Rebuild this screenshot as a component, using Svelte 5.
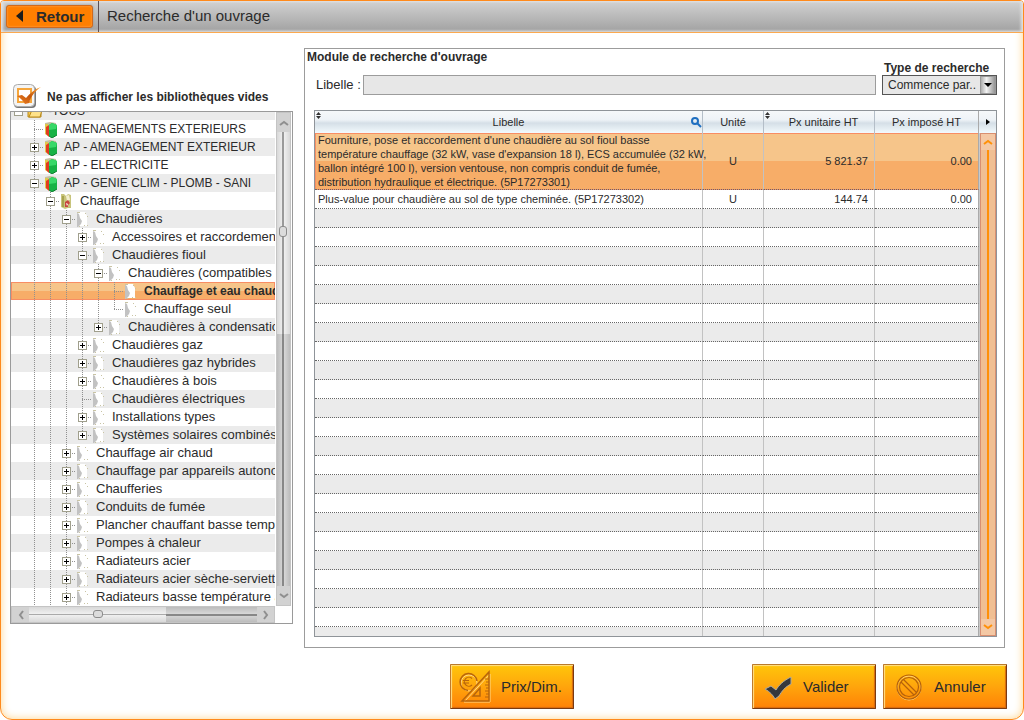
<script>
  // Tree rows: [level, state, icon, label]; state is '+', '-' or ''.
  const source = [
    [0, '-', 'folder', '-TOUS-'],
    [1, '', 'book', 'AMENAGEMENTS EXTERIEURS'],
    [1, '+', 'book', 'AP - AMENAGEMENT EXTERIEUR'],
    [1, '+', 'book', 'AP - ELECTRICITE'],
    [1, '-', 'book', 'AP - GENIE CLIM - PLOMB - SANI'],
    [2, '-', 'heat', 'Chauffage'],
    [3, '-', 'page', 'Chaudières'],
    [4, '+', 'page', 'Accessoires et raccordements'],
    [4, '-', 'page', 'Chaudières fioul'],
    [5, '-', 'page', 'Chaudières (compatibles "'],
    [6, '', 'page', 'Chauffage et eau chaude'],
    [6, '', 'page', 'Chauffage seul'],
    [5, '+', 'page', 'Chaudières à condensation'],
    [4, '+', 'page', 'Chaudières gaz'],
    [4, '+', 'page', 'Chaudières gaz hybrides'],
    [4, '+', 'page', 'Chaudières à bois'],
    [4, '', 'page', 'Chaudières électriques'],
    [4, '+', 'page', 'Installations types'],
    [4, '+', 'page', 'Systèmes solaires combinés'],
    [3, '+', 'page', 'Chauffage air chaud'],
    [3, '+', 'page', 'Chauffage par appareils autonomes'],
    [3, '+', 'page', 'Chaufferies'],
    [3, '+', 'page', 'Conduits de fumée'],
    [3, '+', 'page', 'Plancher chauffant basse température'],
    [3, '+', 'page', 'Pompes à chaleur'],
    [3, '+', 'page', 'Radiateurs acier'],
    [3, '+', 'page', 'Radiateurs acier sèche-serviettes'],
    [3, '+', 'page', 'Radiateurs basse température acier']
  ];

  // The branches of levels 1 to 3 go on below the last loaded row.
  const openLevels = 3;

  function continues(index, level) {
    for (let i = index + 1; i < source.length; i++) {
      if (source[i][0] < level) return false;
      if (source[i][0] === level) return true;
    }
    return level <= openLevels;
  }

  const nodes = source.map(([level, state, icon, label], index) => {
    const guides = [];
    for (let j = 1; j <= level; j++) {
      const full = continues(index, j);
      if (full || j === level) guides.push({ x: 7 + 16 * j, end: full ? 18 : 9 });
    }
    return { level, state, icon, label, guides, x: 7 + 16 * level };
  });

  let selected = $state(10);
  let hideEmpty = $state(true);
  let query = $state('');
  let mode = $state('Commence par..');

  const works = [
    {
      lines: [
        "Fourniture, pose et raccordement d'une chaudière au sol fioul basse",
        "température chauffage (32 kW, vase d'expansion 18 l), ECS accumulée (32 kW,",
        'ballon intégré 100 l), version ventouse, non compris conduit de fumée,',
        'distribution hydraulique et électrique. (5P17273301)'
      ],
      unit: 'U', price: '5 821.37', forced: '0.00'
    },
    {
      lines: ['Plus-value pour chaudière au sol de type cheminée. (5P17273302)'],
      unit: 'U', price: '144.74', forced: '0.00'
    }
  ];
  const blanks = Array.from({ length: 23 });
</script>

{#snippet sorter()}
  <svg class="sorter" width="5" height="7" viewBox="0 0 5 7" aria-hidden="true">
    <path d="M2.5 0 5 3H0zM0 4h5L2.500 7z" fill="#333" />
  </svg>
{/snippet}

<div class="window">
  <header>
    <button class="back">
      <svg width="8" height="12" viewBox="0 0 8 12" aria-hidden="true"><path d="M7 0v12L0 6z" fill="#1c1c1c" /></svg>
      Retour
    </button>
    <h1>Recherche d'un ouvrage</h1>
  </header>

  <main>
    <section class="left">
      <label class="hide">
        <span class="tick">
          <input type="checkbox" bind:checked={hideEmpty} />
          <svg width="28" height="26" viewBox="0 0 28 26" aria-hidden="true">
            <defs>
              <linearGradient id="tickFill" x1="0" y1="1" x2="1" y2="0">
                <stop offset="0" stop-color="#f08428" /><stop offset="0.5" stop-color="#c4560a" /><stop offset="1" stop-color="#ffab3a" />
              </linearGradient>
            </defs>
            <rect x="1" y="2" width="22" height="22" rx="4" fill="#777" />
            <rect x="0.500" y="0.500" width="21" height="22" rx="4" fill="#f4f4f4" stroke="#aaa" />
            <rect x="5" y="5" width="13" height="13" fill="#fff" stroke="#f5a63c" stroke-width="2" />
            {#if hideEmpty}
              <path d="M4 12l5-1 4 3c4-5 9-9 15-11-6 4-10 9-12 16l-4 1c-2-3-4-6-8-8z" fill="url(#tickFill)" />
            {/if}
          </svg>
        </span>
        Ne pas afficher les bibliothèques vides
      </label>

      <div class="tree">
        <div class="view">
          <ul>
            {#each nodes as node, i}
              <li>
                <button class="node" class:upper={node.level < 2} class:selected={i === selected} onclick={() => (selected = i)}>
                  <svg width={node.x + 26} height="18" aria-hidden="true">
                    <g stroke="#909090" stroke-dasharray="1 1">
                      {#each node.guides as g}
                        <path d="M{g.x + 0.5} 0V{g.end}" />
                      {/each}
                      {#if node.level > 0}<path d="M{node.x} 9.500h10" />{/if}
                    </g>
                    {#if node.state}
                      <g transform="translate({node.x - 4} 5)">
                        <rect x="0.500" y="0.500" width="8" height="8" fill="#fff" stroke="#a09f8c" />
                        <path d="M2 4.500h5" stroke="#000" />
                        {#if node.state === '+'}<path d="M4.500 2v5" stroke="#000" />{/if}
                      </g>
                    {/if}
                    <g transform="translate({node.x + 10} 1)">
                      {#if node.icon === 'folder'}
                        <path d="M0 14V4l2-2h4l1 2h6v10z" fill="#f6c94f" stroke="#b98a1c" />
                        <path d="M1 14l3-7h10l-2 7z" fill="#ffe28a" stroke="#b98a1c" />
                      {:else if node.icon === 'book'}
                        <path d="M1 2l5-1 6 1v3H1z" fill="#c3bfa0" />
                        <path d="M1 3h3v12l-3-2z" fill="#e0c84c" />
                        <path d="M2 6l3-2v12l-3-3z" fill="#e23a22" />
                        <path d="M5 4l3-2 5 2v10l-5 3-3-2z" fill="#17b245" />
                        <path d="M5 4l3-2 5 2-1 4-7 1z" fill="#38d868" />
                        <path d="M5 15l3 2 5-3" fill="none" stroke="#0a7c2c" />
                      {:else if node.icon === 'heat'}
                        <path d="M1 1h3l2 2 2-2 3 1v13H8l-3 1-4-2z" fill="#c8c47c" />
                        <path d="M2 3h2v11H2z" fill="#a7a24e" />
                        <path d="M6 3l3-1 1 5-3 1z" fill="#f4efcf" />
                        <path d="M5 9l3-2 2 3-2 2v2H5z" fill="#c8463f" />
                        <path d="M6 10l2 1-1 2z" fill="#fff" />
                      {:else}
                        <path d="M2 1h7l2 4v10H3z" fill="#fff" />
                        <path d="M1 2l2 1 1 4 2 3-1 3-3 3H1z" fill="#c2c2c2" />
                        <path d="M1 1.500h3M9 2.500h1M11 5.500h1M11 14.500h1M8 14.500h1M3 15.500h1" stroke="#c9c4a4" />
                      {/if}
                    </g>
                  </svg>
                  <span>{node.label}</span>
                </button>
              </li>
            {/each}
          </ul>
        </div>
        <div class="vbar">
          <i class="end"><svg width="10" height="6" viewBox="0 0 10 6"><path d="M1 5l4-3 4 3" fill="none" stroke="#8f8f8f" stroke-width="2" /></svg></i>
          <i class="before"></i>
          <i class="after"></i>
          <i class="end"><svg width="10" height="6" viewBox="0 0 10 6"><path d="M1 1l4 3 4-3" fill="none" stroke="#8f8f8f" stroke-width="2" /></svg></i>
          <b></b>
        </div>
        <div class="hbar">
          <i class="end"><svg width="6" height="10" viewBox="0 0 6 10"><path d="M5 1L2 5l3 4" fill="none" stroke="#8f8f8f" stroke-width="2" /></svg></i>
          <i class="before"></i>
          <i class="after"></i>
          <i class="end"><svg width="6" height="10" viewBox="0 0 6 10"><path d="M1 1l3 4-3 4" fill="none" stroke="#8f8f8f" stroke-width="2" /></svg></i>
          <b></b>
        </div>
      </div>
    </section>

    <section class="module">
      <h2>Module de recherche d'ouvrage</h2>
      <div class="search">
        <label for="libelle">Libelle :</label>
        <input id="libelle" type="text" bind:value={query} />
        <div class="kind">
          <label for="mode">Type de recherche</label>
          <span class="combo">
            <select id="mode" bind:value={mode}>
              <option>Commence par..</option>
              <option>Contient</option>
            </select>
            <svg width="16" height="18" viewBox="0 0 16 18" aria-hidden="true">
              <defs>
                <linearGradient id="arrowFill" x1="0" y1="0" x2="1" y2="0">
                  <stop offset="0" stop-color="#a8a8a8" /><stop offset="0.4" stop-color="#f2f2f2" /><stop offset="1" stop-color="#8e8e8e" />
                </linearGradient>
              </defs>
              <rect x="0.500" y="0.500" width="15" height="17" fill="url(#arrowFill)" stroke="#999" />
              <path d="M4 7h8l-4 4z" fill="#000" />
            </svg>
          </span>
        </div>
      </div>

      <div class="grid">
        <div class="cells">
        <table>
          <colgroup><col /><col class="c-unit" /><col class="c-price" /><col class="c-forced" /></colgroup>
          <thead>
            <tr>
              <th>
                {@render sorter()}Libelle
                <svg class="lens" width="11" height="11" viewBox="0 0 11 11" aria-hidden="true">
                  <circle cx="4" cy="4" r="3" fill="none" stroke="#1f6fc0" stroke-width="2" />
                  <path d="M6 6l4 4" stroke="#1f6fc0" stroke-width="2" />
                </svg>
              </th>
              <th>Unité</th>
              <th>{@render sorter()}<span class="shift">Px unitaire HT</span></th>
              <th>Px imposé HT</th>
            </tr>
          </thead>
          <tbody>
            {#each works as work, i}
              <tr class:current={i === 0}>
                <td class="text">{#each work.lines as line}<div>{line}</div>{/each}</td>
                <td class="unit">{work.unit}</td>
                <td class="num">{work.price}</td>
                <td class="num">{work.forced}</td>
              </tr>
            {/each}
            {#each blanks as _}
              <tr><td></td><td></td><td></td><td></td></tr>
            {/each}
          </tbody>
        </table>
        </div>
        <div class="rail">
          <button class="more" aria-label="Colonnes suivantes">
            <svg width="4" height="6" viewBox="0 0 4 6"><path d="M0 0l4 3-4 3z" fill="#000" /></svg>
          </button>
          <div class="obar">
            <i class="end"><svg width="10" height="6" viewBox="0 0 10 6"><path d="M1 5l4-3 4 3" fill="none" stroke="#ff9008" stroke-width="2" /></svg></i>
            <i class="line"></i>
            <i class="end"><svg width="10" height="6" viewBox="0 0 10 6"><path d="M1 1l4 3 4-3" fill="none" stroke="#ff9008" stroke-width="2" /></svg></i>
          </div>
        </div>
      </div>
    </section>
  </main>

  <footer>
    <button class="action middle">
      <svg width="32" height="34" viewBox="0 0 32 34" aria-hidden="true">
        <g fill="none" stroke="#ffd98a" transform="translate(1 1)">
          <circle cx="9" cy="12" r="8" /><path d="M30 3v28H4z" />
        </g>
        <g fill="none" stroke="#b8650c" stroke-width="1.500">
          <path d="M9 20.500A8.500 8.500 0 1 1 18 11" />
          <path d="M13 8.500A4.500 4.500 0 1 0 13 15M4 10.500h6M4 13h6" stroke-width="1.200" />
          <path d="M30 2v29H3z" />
          <path d="M21 18v8h-7z" />
          <path d="M26 9h4M27 12h3M26 15h4M27 18h3M26 21h4M27 24h3M26 27h4" stroke-width="1" />
        </g>
      </svg>
      Prix/Dim.
    </button>
    <div class="confirm">
      <button class="action">
        <svg width="32" height="34" viewBox="0 0 32 34" aria-hidden="true">
          <path d="M4 19l6-3 5 4c3-5 7-9 15-13v7c-6 3-9 7-12 12l-4 3c-2-4-5-7-10-10z" fill="#35373c" stroke="#b0aca0" />
        </svg>
        Valider
      </button>
      <button class="action">
        <svg width="32" height="34" viewBox="0 0 32 34" aria-hidden="true">
          <g fill="none" stroke="#ffcf74"><circle cx="17" cy="18" r="12" /></g>
          <g fill="none" stroke="#b5610b" stroke-width="1.200">
            <circle cx="17" cy="17" r="12" /><circle cx="17" cy="17" r="9.500" />
            <path d="M9 12l13 13M11.500 9.500l13 13" />
          </g>
        </svg>
        Annuler
      </button>
    </div>
  </footer>
</div>

<style>
  :global(body) { background: #fff; }
  * { box-sizing: border-box; }
  .window {
    display: flex;
    flex-direction: column;
    height: 100vh;
    border: 1px solid #ff8a1c;
    border-radius: 4px 4px 12px 12px;
    box-shadow: inset 0 0 8px #ffd48a;
    overflow: hidden;
    font-family: "Liberation Sans", Arial, sans-serif;
    font-size: 12px;
    color: #2b2b2b;
  }
  button, input, select { font: inherit; color: inherit; margin: 0; }
  h1, h2, ul { margin: 0; padding: 0; list-style: none; }
  svg { display: block; flex: none; }

  header {
    flex: none;
    display: flex;
    align-items: stretch;
    height: 32px;
    border-bottom: 1px solid #fba950;
    background: linear-gradient(#d2d2d2, #a6a6a6 90%, #b4b4b4);
    box-shadow: inset 2px 0 3px #e4e4e4, inset -2px 0 3px #e4e4e4;
    padding-left: 5px;
  }
  .back {
    align-self: center;
    display: flex;
    align-items: center;
    gap: 12px;
    width: 87px;
    height: 23px;
    padding: 0 0 1px 9px;
    border: 1px solid #d2691a;
    border-radius: 3px;
    background: #ff7f00;
    box-shadow: inset 0 0 2px #ffb066, 0 0 2px #8c8c8c;
    font-size: 15px;
    font-weight: bold;
  }
  h1 {
    margin-left: 5px;
    padding-left: 8px;
    border-left: 1px solid #5c5054;
    font-size: 15px;
    font-weight: normal;
    line-height: 30px;
  }

  main {
    flex: 1;
    min-height: 0;
    display: flex;
    gap: 11px;
    padding: 15px 18px 0 9px;
  }
  .left {
    flex: none;
    width: 283px;
    display: flex;
    flex-direction: column;
    padding: 36px 0 24px;
  }
  .hide {
    display: flex;
    align-items: center;
    gap: 6px;
    height: 27px;
    padding: 0 0 2px 3px;
    font-weight: bold;
  }
  .tick { position: relative; }
  .tick input { position: absolute; inset: 0; width: 100%; height: 100%; opacity: 0; }

  .tree {
    flex: 1;
    min-height: 0;
    display: grid;
    grid-template: minmax(0, 1fr) 17px / minmax(0, 1fr) 17px;
    border: 1px solid #9a9a9a;
    background: #fff;
  }
  .view { overflow: hidden; }
  ul { margin-top: -10px; }
  li:nth-child(odd) { background: #ebebeb; }
  .node {
    display: flex;
    align-items: center;
    width: 100%;
    height: 18px;
    padding: 0;
    border: 0;
    background: none;
    white-space: nowrap;
    overflow: hidden;
    gap: 4px;
    font-size: 13px;
  }
  .node span { padding-bottom: 2px; }
  .node.upper { font-size: 12px; }
  .node.upper span, .node.selected span { padding-bottom: 0; }
  .node.selected {
    background: linear-gradient(#f6c58a 50%, #f7ad68 50%);
    box-shadow: inset 0 0 0 1px #f88d64;
    font-size: 12px;
    font-weight: bold;
  }

  .vbar, .hbar { position: relative; display: flex; border: 1px solid #c4c4c4; background: #d2d2d2; }
  .vbar { flex-direction: column; margin: 0 1px; }
  i { display: flex; align-items: center; justify-content: center; flex: none; }
  .vbar .end { height: 19px; background: #d2d2d2; }
  .vbar .before, .vbar .after {
    flex: 4;
    background: linear-gradient(90deg, transparent 5px, #9a9a9a 5px, #9a9a9a 7px, transparent 7px), linear-gradient(90deg, #d8d8d8, #f2f2f2, #d8d8d8);
  }
  .vbar .after {
    flex: 5;
    background: linear-gradient(90deg, transparent 5px, #888 5px, #888 7px, transparent 7px), linear-gradient(90deg, #bcbcbc, #dadada, #bcbcbc);
  }
  .hbar .end { width: 17px; background: #d2d2d2; }
  .hbar .before, .hbar .after {
    flex: 3;
    background: linear-gradient(transparent 7px, #aaa 7px, #aaa 8px, transparent 8px), linear-gradient(#d8d8d8, #f2f2f2, #d8d8d8);
  }
  .hbar .after {
    flex: 2;
    background: linear-gradient(transparent 7px, #888 7px, #888 9px, transparent 9px), linear-gradient(#bcbcbc, #dadada, #bcbcbc);
  }
  .vbar b, .hbar b { position: absolute; border: 1px solid #8c8c8c; border-radius: 3px; background: #dcdcdc; }
  .vbar b { left: 2px; top: 23%; width: 8px; height: 11px; }
  .hbar b { left: 31%; top: 3px; width: 10px; height: 8px; }

  .module {
    flex: 1;
    min-width: 0;
    display: flex;
    flex-direction: column;
    padding: 0 7px 10px 9px;
    border: 1px solid #9c9c9c;
    background: #fff;
  }
  h2 { margin-left: -7px; font-size: 12px; line-height: 16px; }
  .search { display: flex; align-items: flex-end; height: 30px; font-size: 13px; }
  .search > label { width: 49px; padding-left: 2px; line-height: 20px; white-space: nowrap; }
  .search input {
    flex: 1;
    min-width: 0;
    height: 20px;
    padding: 0 4px;
    border: 1px solid #9c9c9c;
    border-radius: 0;
    background: #e7e7e7;
  }
  .kind { width: 115px; margin-left: 6px; }
  .kind label { display: block; padding-left: 2px; font-size: 12px; font-weight: bold; line-height: 14px; white-space: nowrap; }
  .combo { position: relative; display: block; }
  .combo select {
    display: block;
    width: 100%;
    height: 20px;
    padding: 0 0 0 5px;
    border: 1px solid #555;
    border-radius: 0;
    background: #e7e7e7;
    appearance: none;
    font-size: 12px;
  }
  .combo svg { position: absolute; right: 1px; top: 1px; pointer-events: none; }

  .grid {
    flex: 1;
    min-height: 0;
    display: flex;
    margin-top: 15px;
    border: 1px solid #8f9499;
    overflow: hidden;
  }
  .cells { flex: 1; min-width: 0; }
  table { width: 100%; table-layout: fixed; border-collapse: separate; border-spacing: 0; font-size: 11px; }
  .c-unit { width: 61px; }
  .c-price { width: 111px; }
  .c-forced { width: 104px; }
  th {
    position: relative;
    height: 22px;
    padding: 0;
    border-right: 1px solid #b4bec8;
    background: linear-gradient(#f6f8fa, #eef3f7 40%, #d5dfe7 55%, #f2fafd);
    font-weight: normal;
  }
  .sorter { position: absolute; left: 1px; top: 1px; }
  .lens { position: absolute; right: 0; top: 6px; }
  .shift { padding-left: 9px; }
  td { height: 19px; padding: 0; border-right: 1px solid #c2c2c2; border-bottom: 1px dotted #666; line-height: 14px; }
  th:last-child, td:last-child { border-right-color: #aaa; }
  tbody tr:nth-child(odd) { background: #ebebeb; }
  tbody tr.current {
    background: linear-gradient(#f6c58a 50%, #f7ad68 50%);
    box-shadow: inset 0 0 0 1px #f88d64;
  }
  .text { padding-left: 3px; white-space: nowrap; }
  .unit { text-align: center; }
  .num { padding-right: 6px; text-align: right; }

  .rail { flex: none; width: 17px; display: flex; flex-direction: column; background: #c9c9c9; }
  .more {
    height: 22px;
    display: flex;
    align-items: center;
    justify-content: center;
    padding: 0;
    border: 0;
    background: linear-gradient(#f6f8fa, #eef3f7 40%, #d5dfe7 55%, #f2fafd);
  }
  .obar {
    flex: 1;
    display: flex;
    flex-direction: column;
    margin-left: 1px;
    border: 1px solid #d98f70;
    background: #f0bf93;
  }
  .obar .end { height: 16px; background: #f4c8a4; }
  .obar .line { flex: 1; background: linear-gradient(90deg, transparent 6px, #ff9008 6px, #ff9008 8px, transparent 8px); }

  footer {
    flex: none;
    display: grid;
    grid-template-columns: 1fr auto 1fr;
    padding: 16px 16px 10px;
  }
  .middle { grid-column: 2; }
  .confirm { display: flex; justify-content: flex-end; gap: 7px; }
  .action {
    display: flex;
    align-items: center;
    gap: 10px;
    width: 124px;
    height: 45px;
    padding: 0 0 0 8px;
    border: 1px solid;
    border-color: #b97a2c #7a3a10 #7a3a10 #c07a2c;
    border-radius: 1px;
    background: linear-gradient(#ffc60a, #ffa50c 50%, #ff8206);
    box-shadow: inset 1px 1px 1px #ffe08a, inset -1px -1px 1px #d86a10;
    font-size: 15px;
  }
</style>
